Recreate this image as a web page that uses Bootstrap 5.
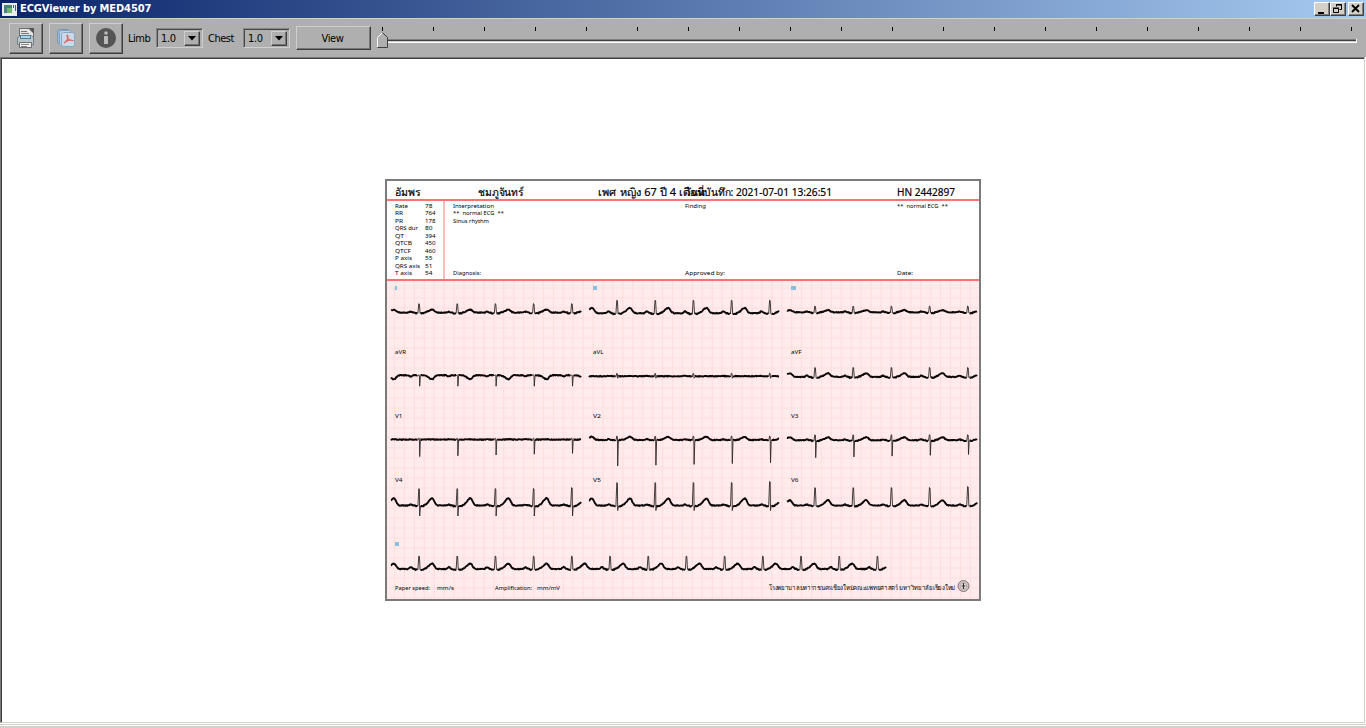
<!DOCTYPE html>
<html lang="th">
<head>
<meta charset="utf-8">
<title>ECGViewer by MED4507</title>
<link rel="stylesheet" href="https://cdn.jsdelivr.net/npm/bootstrap@5.3.0/dist/css/bootstrap.min.css">
<style>
body{font:11px/14px "DejaVu Sans Condensed","Liberation Sans",sans-serif;color:#000;background:#fff;height:728px}
svg{display:block}
.titlebar{height:18px;background:linear-gradient(90deg,#0a246a,#a6caf0);padding:0 2px 0 2px}
.caption-text{font:bold 11px/18px "DejaVu Sans Condensed",sans-serif;color:#fff;width:132px;white-space:nowrap;letter-spacing:-.1px}
.winbtn{width:16px;height:14px;background:#d4d0c8;border:1px solid;border-color:#fff #404040 #404040 #fff;box-shadow:inset -1px -1px #808080;padding:0}
.tools{height:39px;background:#afafaf;border-top:1px solid #d4d0c8;padding-left:9px}
.raised{background:#afafaf;border:1px solid;border-color:#cfcfcf #404040 #404040 #cfcfcf;box-shadow:inset -1px -1px #747474;padding:0;color:#000;border-radius:0;font-size:11px}
.toolbtn{width:34px;height:31px;margin-right:6px}
.toollabel{letter-spacing:-.5px;padding-top:2px}
.combo{width:47px;height:20px;border:1px solid;border-color:#858585 #cfcfcf #cfcfcf #858585;box-shadow:inset 1px 1px #484848;padding:2px 2px 2px 4px}
.combo>span:first-child{padding-top:2px;letter-spacing:-.3px}
.drop{width:16px;height:15px}
.viewbtn{width:75px;height:24px;padding:1px 2px 0 0!important;letter-spacing:-.4px}
.viewport{border:1px solid;border-color:#777 #d4d0c8 #d4d0c8 #777;margin-right:1px;box-shadow:inset 1px 1px #404040}
.statusline{height:5px;border-bottom:2px solid #d4d0c8;background:linear-gradient(#fff 1px,#d4d0c8 1px 2px,#fff 2px)}
.sheet text{font-family:"Noto Sans","DejaVu Sans",sans-serif;fill:#000}
.sheet .patient{stroke:#000;stroke-width:.2px}
</style>
</head>
<body class="d-flex flex-column overflow-hidden">
<header class="titlebar d-flex align-items-center flex-shrink-0">
  <svg width="16" height="13" class="me-0"><path fill="#ececec" d="M0 0h15v13H0z"/><path fill="#4a837c" d="M2 2h8v8H2z"/><path fill="#70b86b" d="M5 5h5v5H5z"/><path fill="#3a6090" d="M11 2h1v3h-1zM13 2h1v6h-1z"/></svg>
  <span class="caption-text" style="margin-left:2px">ECGViewer by MED4507</span>
  <div class="d-flex ms-auto">
    <button class="winbtn"><svg width="14" height="12"><path d="M3 9h6v2H3z"/></svg></button>
    <button class="winbtn" style="margin-right:2px"><svg width="14" height="12"><path fill="none" stroke="#000" d="M5.500 3.500v-2h5v5h-2M5 2h6M2.500 5.500h5v4h-5zM2 5h6"/></svg></button>
    <button class="winbtn"><svg width="14" height="12"><path stroke="#000" stroke-width="1.800" d="M3 2l7 7M10 2l-7 7"/></svg></button>
  </div>
</header>
<nav class="tools d-flex align-items-center flex-shrink-0">
  <button class="raised toolbtn d-flex align-items-center justify-content-center"><svg width="20" height="22"><path fill="#e4e4e4" stroke="#555" stroke-width=".8" d="M3.500 1.500h10l4 4v7h-14z"/><path fill="#555" d="M12 1h6v6z"/><path stroke="#777" d="M5 4.500h6M5 6.500h8"/><path fill="#b9c5ca" stroke="#63737a" stroke-width=".8" d="M1.500 10.500l3-2h11l2 2v7h-16z"/><path fill="#527f9a" d="M4 8h11v4H4z"/><path fill="#a9d6e9" d="M5 9h9v2H5z"/><path fill="#eee" stroke="#555" stroke-width=".8" d="M3.500 15.500h12v5h-12z"/><path stroke="#888" d="M5 17.500h8M5 19.500h6"/></svg></button>
  <button class="raised toolbtn d-flex align-items-center justify-content-center"><svg width="20" height="20"><rect x="1.500" y="1.500" width="12" height="14" rx="2" fill="#9db9d3" stroke="#7498b9"/><rect x="3.500" y="2.500" width="12" height="15" rx="2" fill="#bed3e6" stroke="#7ea2c2"/><rect x="5.500" y="4.500" width="13" height="14" rx="2" fill="#c9d9e8" stroke="#86a6c4"/><path fill="none" stroke="#d66b68" stroke-width="1.200" d="M8 15c3-2 5-6 3.500-8-1.500 0 .5 6 5 5.500-2-1-6 0-8.500 2.500"/></svg></button>
  <button class="raised toolbtn d-flex align-items-center justify-content-center" style="margin-right:5px"><svg width="22" height="22"><circle cx="11" cy="11" r="10" fill="#555"/><circle cx="11" cy="6" r="1.800" fill="#bbb"/><path fill="#bbb" d="M9 9h4v8H9z"/></svg></button>
  <span class="toollabel" style="width:28px">Limb</span>
  <div class="combo d-flex align-items-center justify-content-between" style="margin-right:5px"><span>1.0</span><span class="raised drop"><svg width="14" height="13"><path d="M3 4h8L7 8.500z"/></svg></span></div>
  <span class="toollabel" style="width:35px">Chest</span>
  <div class="combo d-flex align-items-center justify-content-between" style="margin-right:6px"><span>1.0</span><span class="raised drop"><svg width="14" height="13"><path d="M3 4h8L7 8.500z"/></svg></span></div>
  <button class="raised viewbtn">View</button>
  <svg id="slider" class="flex-grow-1" height="38" viewBox="371 19 995 38" preserveAspectRatio="xMinYMin"></svg>
</nav>
<main class="viewport flex-grow-1 d-flex align-items-center justify-content-center">
  <svg id="sheet" class="sheet" width="596" height="422" viewBox="385 179 596 422"></svg>
</main>
<footer class="statusline flex-shrink-0"></footer>
<script src="https://cdn.jsdelivr.net/npm/bootstrap@5.3.0/dist/js/bootstrap.bundle.min.js"></script>
<script>
// Slider: tick marks, groove and handle
let s='';
for(let k=0;k<20;k++) s+=`<path d="M${382+51*k} 27h1v4h-1z"/>`;
s+='<path fill="#808080" d="M388 39h969v1H388z"/><path fill="#404040" d="M388 40h968v1H388z"/><path fill="#cfcfcf" d="M388 41h968v1H388z"/><path fill="#fff" d="M388 42h969v1H388zM1356 39h1v3h-1z"/>';
s+='<path fill="#afafaf" d="M377 37l5.500-5 5.500 5v11h-11z"/><path fill="none" stroke="#fff" d="M377.500 47V37.500l5-5"/><path fill="none" stroke="#404040" d="M382.500 32.500l5 5v10h-10"/>';
document.getElementById('slider').innerHTML=s;

// Report sheet
let o='<path fill="#fff" d="M386 180h594v420H386z"/><path fill="#ffebeb" d="M386 280h594v320H386z"/>';
let g='';
for(let x=394.500;x<980;x+=9.930) g+=`M${x.toFixed(1)} 281V600`;
for(let y=288;y<600;y+=10) g+=`M387 ${y}H980`;
o+=`<path d="${g}" stroke="#ffdede" stroke-width="1.200"/>`;
o+='<path stroke="#ff7070" stroke-width="2" d="M387 200H979M387 280H979"/><path stroke="#ffbaba" stroke-width="2" d="M444 201V279"/>';
const t=(x,y,str,w,size=6)=>{o+=`<text x="${x}" y="${y}" font-size="${size}"${size>10?' class="patient"':''} textLength="${w}" lengthAdjust="spacingAndGlyphs">${str}</text>`};
t(395,196,'อัมพร',26,10.500);t(478,196,'ชมภูจันทร์',46,10.500);
t(598,196,'เพศ หญิง 67 ปี 4 เดือน',106,10.500);
t(685,196,'วันที่บันทึก: 2021-07-01 13:26:51',147,10.500);
t(897,196,'HN 2442897',58,10.500);
[['Rate','78',13],['RR','764',8],['PR','178',8],['QRS dur','80',23],['QT','394',9],['QTCB','450',17],['QTCF','460',16],['P axis','55',17],['QRS axis','51',25],['T axis','54',17]].forEach((r,i)=>{
  const y=208+i*7.450;t(395,y,r[0],r[2]);t(425,y,r[1],r[1].length>2?10.500:7.500);
});
t(453,208,'Interpretation',41);t(453,215,'** &#160;normal ECG &#160;**',51);t(453,223,'Sinus rhythm',36);
t(685,208,'Finding',21);t(897,208,'** &#160;normal ECG &#160;**',51);
t(453,275,'Diagnosis:',28);t(685,275,'Approved by:',40);t(897,275,'Date:',16);
[['aVR',352],['V1',416],['V4',480]].forEach(r=>t(395,r[1]+2.300,r[0],r[0].length>2?11:7.500));
[['aVL',352],['V2',416],['V5',480]].forEach(r=>t(593,r[1]+2.300,r[0],r[0].length>2?10.500:8));
[['aVF',352],['V3',416],['V6',480]].forEach(r=>t(791,r[1]+2.300,r[0],r[0].length>2?10.500:7.500));
// Limb lead names I, II, III and the rhythm strip sit on a blue tint
[[395,286,2,'I'],[593,286,4,'II'],[791,286,5,'III'],[395,542,4,'II']].forEach(r=>{
  o+=`<rect x="${r[0]}" y="${r[1]}" width="${r[2]}" height="4" fill="#8dc6e6"/><text x="${r[0]}" y="${r[1]+4}" font-size="5" style="fill:#8bb0cc" textLength="${r[2]}">${r[3]}</text>`;
});
t(395,590,'Paper speed:',35);t(437,590,'mm/s',17);t(495,590,'Amplification:',37);t(537,590,'mm/mV',23);
t(769,590,'โรงพยาบาลมหาราชนครเชียงใหม่คณะแพทยศาสตร์ มหาวิทยาลัยเชียงใหม่',186,6.500);
o+='<circle cx="963.500" cy="586" r="5.500" fill="#d4c5c5" stroke="#807878"/><circle cx="963.500" cy="586" r="3.400" fill="#eee0e0" stroke="#958989" stroke-width=".6"/><path stroke="#333" stroke-width="1.200" d="M963.500 583v6M961.500 586h4"/>';

// One lead: x start, baseline, R height, S depth, T height, P height, beats, width
function lead(x0,b,R,S,T,P,n=5,w=190){
  let main='',q='',seed=Math.round(x0*7+b);
  const rnd=()=>{seed=(seed*16807)%2147483647;return seed/2147483647-.5};
  let up=false;
  for(let x=x0;x<=x0+w;x+=.5){
    const k=Math.round((x-x0-28)/38.200);let y=b;
    for(let j=-1;j<=n;j++){
      const d=x-x0-28-j*38.200, dt=d-13.200, dp=d+8.300;
      y-=T*Math.exp(-(dt*dt)/(dt<0?22:8));
      if(j>=0) y-=P*Math.exp(-(dp*dp)/3);
      if(d>-4&&d<5&&j<n&&R>4) y+=.7;
    }
    const d=x-x0-28-k*38.200;
    y+=rnd()*.8;
    if(k>=0&&k<n&&d>-1.200&&d<1.200){up=false;continue}
    main+=(up?'L':'M')+x+' '+y.toFixed(2);up=true;
  }
  for(let k=0;k<n;k++){
    const x=x0+28+k*38.200,r=R+(k==n-1&&n==5&&R>15?1:0),sd=S>12&&R<6?S-k*.8:S;
    q+=`M${x-1.100} ${b+.8}L${x-.2} ${b-r}L${x+.4} ${b-r+.5}`+(sd?`L${x+.7} ${b+sd}L${x+1.400} ${b+.5}`:`L${x+1.100} ${b+.8}`);
  }
  o+=`<path d="${q}" fill="none" stroke="#2c2828" stroke-width=".9"/><path d="${main}" fill="none" stroke="#0d0808" stroke-width="1.900" stroke-linejoin="round"/>`;
}
lead(391,312.600,9,0,3,.9);lead(589,313.200,13,0,5.300,2);lead(787,312.300,6.300,0,2.200,.8);
lead(391,375.200,.4,11,-4,-1.300);lead(589,376.200,3,2,0,.3);lead(787,376.900,9.500,0,3.700,1.300);
lead(391,439.600,1.500,17,.3,.4);lead(589,440,4,26,3.200,.8);lead(787,440.200,5.500,17.500,2.900,.8);
lead(391,505.500,17,10.500,7.300,1);lead(589,505.500,23,5,7,1);lead(787,505.500,18,0,5.300,1);
lead(391,569,13,0,5.400,2,13,495);
o+='<rect x="386" y="180" width="594" height="420" fill="none" stroke="#7b7b7b" stroke-width="2"/>';
document.getElementById('sheet').innerHTML=o;
</script>
</body>
</html>
